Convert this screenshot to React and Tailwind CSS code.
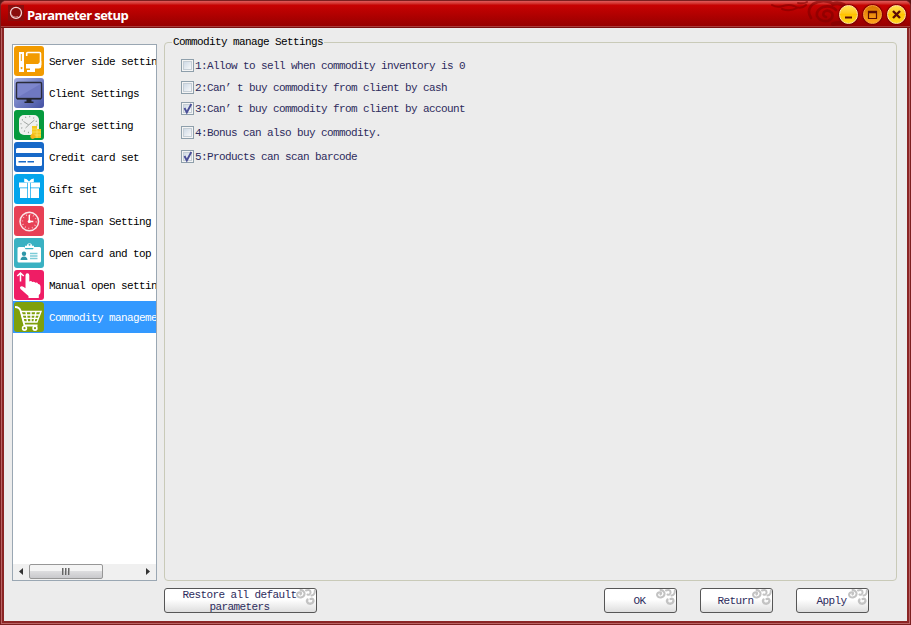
import React from "react";
import clsx from "clsx";

function ServerIcon() {
  return (
    <>
      <path fill="#fff" fillRule="evenodd" d="M5 6h5v20H5zM6.800 8v7h1V8zM7.500 21a1 1 0 1 0 .1 0z" />
      <path d="M12.700 10V7.500Q12.700 6.500 13.700 6.500H25.500Q26.500 6.500 26.500 7.500V19" fill="none" stroke="#fff" strokeWidth="1.600" />
      <path fill="#fff" d="M12 18h12l3.300-3v5q0 2.500-2.500 2.500H12zM16 22h5v2.200h-5zM13 24h8v2h-8z" />
    </>
  );
}

function MonitorIcon() {
  return (
    <>
      <rect x="2.500" y="4.500" width="25" height="16" rx="1" fill="#7d86cc" stroke="#2a2c3a" strokeWidth="1.400" />
      <path d="M3.500 19.500 26.500 6v13.500z" fill="#5963b2" opacity=".4" />
      <path fill="#23242e" d="M3 20h24v1.500H3zM12.500 21.500h5V24h-5zM10.500 23.500h9V25h-9z" />
    </>
  );
}

function ClockCoinsIcon() {
  return (
    <>
      <rect x="5" y="5" width="20" height="20" rx="5" fill="#eef0ef" />
      <circle cx="15" cy="14.500" r="8" fill="none" stroke="#939b96" strokeWidth="1.300" strokeDasharray="1 3.190" />
      <path d="m9.500 11.500 5.200 3.400L20.500 10M14.700 15 11.500 18" fill="none" stroke="#8c928e" strokeWidth=".8" />
      <path fill="#f2c71d" d="M18 16h5v3h4v9H17v-2h1z" />
      <path d="M18 19h5M18 22h9M17 25h10M23 19v9" stroke="#fae274" strokeWidth=".7" />
      <circle cx="18.700" cy="26.500" r="2.400" fill="#f5b418" />
    </>
  );
}

function CreditCardIcon() {
  return (
    <>
      <rect x="2" y="6" width="26" height="18" rx="1.500" fill="#fff" />
      <path fill="#1769c8" d="M2 11h26v4H2z" />
      <path d="M4.500 19.700h7.500M13.500 19.700h6.500" stroke="#1769c8" strokeWidth="1.500" />
    </>
  );
}

function GiftIcon() {
  return (
    <>
      <path fill="#fff" d="M5 8.500h8.300v5H5zM16.700 8.500H26v5h-9.300zM6 14.300h7.300V24H6zM16.700 14.300H25V24h-8.300z" />
      <path fill="#fff" d="M14 8.500h2v15.500h-2z" />
      <path fill="#fff" d="M15 8.800 10.200 8V4.500q2.800.2 4.800 3.100 2-2.900 4.800-3.100V8z" />
    </>
  );
}

function ClockIcon() {
  return (
    <>
      <circle cx="15.300" cy="15.500" r="9.300" fill="none" stroke="#fbe6e8" strokeWidth="1.500" />
      <circle cx="15.300" cy="15.500" r="6.900" fill="none" stroke="#f6bcc2" strokeWidth="1.500" strokeDasharray=".9 2.710" />
      <path d="M15.300 9v6.500h4" fill="none" stroke="#fff" strokeWidth="1.400" />
      <circle cx="15.300" cy="15.500" r="1.600" fill="#fff" />
    </>
  );
}

function BadgeIcon() {
  return (
    <>
      <path fill="#fff" fillRule="evenodd" d="M5 9h5.500l1 2.200h7.500l1-2.200h5.500q1.500 0 1.500 1.500v12.500q0 1.500-1.500 1.500H5q-1.500 0-1.500-1.500V10.500Q3.500 9 5 9z" />
      <path fill="#fff" d="M11 10V7.800h2a2.500 2.500 0 1 1 5 0h2V10z" />
      <circle cx="15.500" cy="6.800" r="1" fill="#3ab1c2" />
      <circle cx="10" cy="15.800" r="2.200" fill="#3097a8" />
      <path fill="#3097a8" d="M6.500 22q.3-3.500 3.500-3.500t3.500 3.500z" />
      <path d="M16 15.500h7.500M16 18h7.500M16 20.500h7.500" stroke="#7dccd7" strokeWidth="1.500" />
    </>
  );
}

function HandIcon() {
  return (
    <>
      <path d="M6.500 11.500V3.200M3.300 6l3.200-3 3.200 3" fill="none" stroke="#fff" strokeWidth="1.500" />
      <path
        fill="#fff"
        d="M11.500 5.200q0-2 1.900-2t1.900 2V11.500q1.800-1 3 .4 1.900-.8 3 .8 2-.6 2.900 1.200 2.300-.2 2.300 2.500V22q0 2-1.700 3v3H14.500v-2L6.500 19q-1.300-1.700.2-2.500 1.300-.7 3 .5l1.800 1.200z"
      />
    </>
  );
}

function CartIcon() {
  return (
    <>
      <path d="M1 5Q5.500 5.200 6.500 8.500L10.500 23.500H23.500" fill="none" stroke="#fff" strokeWidth="1.800" />
      <path d="M7 9.500H27L23 20H9.800zM8.200 13H25.500M9.200 16.400H24.300M12 9.500 13.500 20M17 9.500V20M22 9.500 20 20" fill="none" stroke="#fff" strokeWidth="1.400" />
      <circle cx="10.500" cy="26.200" r="1.900" fill="none" stroke="#fff" strokeWidth="1.600" />
      <circle cx="21" cy="26.200" r="1.900" fill="none" stroke="#fff" strokeWidth="1.600" />
    </>
  );
}

const SECTIONS = [
  { label: "Server side settings", color: "bg-[#f29b00]", Icon: ServerIcon },
  { label: "Client Settings", color: "bg-linear-to-br from-[#a5ade0] to-[#4450a3]", Icon: MonitorIcon },
  { label: "Charge setting", color: "bg-[#069a3e]", Icon: ClockCoinsIcon },
  { label: "Credit card set", color: "bg-[#1769c8]", Icon: CreditCardIcon },
  { label: "Gift set", color: "bg-[#03a5ec]", Icon: GiftIcon },
  { label: "Time-span Setting", color: "bg-[#e74055]", Icon: ClockIcon },
  { label: "Open card and top", color: "bg-[#3ab1c2]", Icon: BadgeIcon },
  { label: "Manual open setting", color: "bg-[#ef1d65]", Icon: HandIcon },
  { label: "Commodity management", color: "bg-[#7fa00c]", Icon: CartIcon },
];

const OPTIONS = [
  { label: "1:Allow to sell when commodity inventory is 0", checked: false, space: "mt-[11px]" },
  { label: "2:Can’ t buy commodity from client by cash", checked: false, space: "mt-[9px]" },
  { label: "3:Can’ t buy commodity from client by account", checked: true, space: "mt-[8px]" },
  { label: "4:Bonus can also buy commodity.", checked: false, space: "mt-[11px]" },
  { label: "5:Products can scan barcode", checked: true, space: "mt-[11px]" },
];

function WindowButton({ children, active, label }) {
  return (
    <button
      aria-label={label}
      className={clsx(
        "size-[19px] rounded-full border shadow-[0_0_1px_1px_#7b0000]",
        active
          ? "border-[#f6a83c] bg-linear-to-b from-[#d97800] to-[#ffa21a]"
          : "border-[#ffe9a0] bg-linear-to-b from-[#ffe14a] via-[#ffc400] to-[#ffd51c]"
      )}
    >
      <svg viewBox="0 0 17 17" className="size-[17px]" fill="none" stroke="#5c0c05">
        {children}
      </svg>
    </button>
  );
}

function TitleBar() {
  return (
    <header className="relative flex h-[27px] shrink-0 items-center rounded-t-[5px] border-b border-[#7b1010] bg-linear-to-b from-[#e25a5a] via-[#c80202] via-15% to-[#950000] pr-[4px] pl-[7px] shadow-[inset_0_-1px_0_#a83c3c]">
      <svg viewBox="0 0 16 16" className="mb-[2px] size-4" fill="none">
        <path fill="#8a0d0d" d="M0 0h16v16H0z" />
        <circle cx="8" cy="7.800" r="5.500" stroke="#f3d3d3" strokeWidth="1.300" />
        <path d="M3.500 9.500Q5 13 10 11.500" stroke="#c98080" />
      </svg>
      <h1 className="ml-[3px] flex-1 pt-[2px] font-['Open_Sans',sans-serif] text-[13px] leading-[18px] font-bold tracking-[-0.55px] text-white">
        Parameter setup
      </h1>
      <svg viewBox="0 0 78 26" className="absolute top-0 left-[769px] h-[26px] w-[78px]" fill="none" stroke="#800000" strokeLinecap="round" opacity=".6">
        <path d="M2 4Q7 7 13 5T24 5Q31 9 36 4M12 8Q20 11 27 7M28 2Q34 3 37 1" strokeWidth="2" />
        <path d="M41 17Q36 9 43 3 52 -2 62 2M66 9Q61 4 53 6 46 9 47 15 50 21 58 20 64 17 62 12 58 8 54 11 52 15 56 16" strokeWidth="2.600" />
        <path d="M63 23Q69 21 78 23M63 3Q68 1 74 4" strokeWidth="4" />
      </svg>
      <div className="relative flex gap-[5px]">
        <WindowButton label="Minimize">
          <path d="M5 11.500h7" strokeWidth="2" />
        </WindowButton>
        <WindowButton label="Maximize" active>
          <path d="M4.500 5v7.500h8V5M4 6h9" strokeWidth="1.200" />
          <path d="M4 6h9" strokeWidth="2.500" />
        </WindowButton>
        <WindowButton label="Close">
          <path d="m5 5 7 7m0-7-7 7" strokeWidth="2.400" />
        </WindowButton>
      </div>
    </header>
  );
}

function SectionList() {
  return (
    <nav className="mt-[8px] flex h-[537px] w-[145px] shrink-0 flex-col border border-[#9aa7b3] bg-white">
      <ul className="flex-1 overflow-hidden">
        {SECTIONS.map(({ label, color, Icon }, i) => (
          <li
            key={label}
            className={clsx("flex h-[32px] items-center pl-px", i === 8 && "bg-[#3399ff] text-white")}
          >
            <span className={clsx("size-[30px] shrink-0 overflow-hidden rounded-[3px]", color)}>
              <svg viewBox="0 0 30 30" className="size-[30px]">
                <Icon />
              </svg>
            </span>
            <span className="ml-[5px] pt-px whitespace-nowrap">{label}</span>
          </li>
        ))}
      </ul>
      <div className="flex h-[16px] items-start bg-[#f0f0f0] text-[#333]">
        <svg viewBox="0 0 16 16" className="size-4" fill="currentColor">
          <path d="m10 4-4 3.500 4 3.500z" />
        </svg>
        <div className="flex h-[15px] w-[74px] items-center justify-center gap-px rounded-[2px] border border-[#979797] bg-linear-to-b from-[#f4f4f4] from-50% via-[#dcdcde] via-50% to-[#c9c9cc]">
          <i className="h-[7px] w-[2px] border-l border-[#666] bg-[#aaa]" />
          <i className="h-[7px] w-[2px] border-l border-[#666] bg-[#aaa]" />
          <i className="h-[7px] w-[2px] border-l border-[#666] bg-[#aaa]" />
        </div>
        <svg viewBox="0 0 16 16" className="ml-auto size-4" fill="currentColor">
          <path d="m6 4 4 3.500-4 3.500z" />
        </svg>
      </div>
    </nav>
  );
}

function Option({ label, checked, space }) {
  return (
    <label className={clsx("flex h-[13px] items-center text-[#2d2b5c]", space)}>
      <span className="flex size-[13px] shrink-0 border border-[#8e9fab] bg-[#f4f4f4] p-px">
        <span className="size-[9px] border border-[#c5ced6] bg-linear-to-br from-[#cfdae6] to-[#f7f8f9]">
          {checked && (
            <svg viewBox="0 0 9 9" className="relative -top-px -left-px size-[9px] overflow-visible" fill="none">
              <path d="M1.500 4 3.800 8.500 8.300 0" stroke="#4b4f97" strokeWidth="1.900" />
            </svg>
          )}
        </span>
      </span>
      <span className="ml-px whitespace-pre">{label}</span>
    </label>
  );
}

function SkinButton({ children, className }) {
  return (
    <button
      className={clsx(
        "relative flex h-[25px] items-center justify-center rounded-[3px] border border-[#565656] bg-linear-to-b from-white from-45% to-[#dedede] pr-[2px] leading-[12px] text-[#2d2b5c]",
        className
      )}
    >
      <svg viewBox="0 0 21 17" className="absolute top-0 right-0 h-[17px] w-[21px]" fill="none" stroke="#c3c3c3" strokeWidth="2" strokeLinecap="round">
        <path d="M5.500 5.500Q7 4 5.200 3.300 2 3.500 2 6 3 8.800 6 8.500 10 7.500 9.500 4 8.500 1.200 5.500 1" />
        <path d="M11 1.500Q16 0 15.500 4 14.500 6.500 12.500 5.500M19.800 1.500Q20 6 16.500 6.500" />
        <path d="M12.500 10.500Q11 12.500 13.500 14.500 17.500 15.500 18.500 12 18.500 9 15.500 10" strokeWidth="2.300" />
      </svg>
      <span className="relative">{children}</span>
    </button>
  );
}

export default function App() {
  return (
    <div className="h-[625px] w-[911px] bg-[#5a1414] font-['Liberation_Mono',monospace] text-[11px] leading-[12px] tracking-[-0.6px] text-black">
      <div className="flex h-full flex-col rounded-t-[6px] border border-[#7c1f1f] bg-[#b96464]">
        <TitleBar />
        <main className="mx-px mb-px flex flex-1 flex-col border-2 border-t-0 border-[#8b2525] bg-[#ececec] pt-[8px] pl-[8px]">
          <div className="flex">
            <SectionList />
            <fieldset className="ml-[7px] h-[545px] w-[733px] rounded-[4px] border border-[#c9cab8] pl-[16px]">
              <legend className="-ml-[9px] px-px">Commodity manage Settings</legend>
              {OPTIONS.map((option) => (
                <Option key={option.label} {...option} />
              ))}
            </fieldset>
          </div>
          <footer className="mt-[7px] ml-[152px] flex">
            <SkinButton className="w-[153px]">
              Restore all default
              <br />
              parameters
            </SkinButton>
            <SkinButton className="ml-[287px] w-[73px]">OK</SkinButton>
            <SkinButton className="ml-[23px] w-[73px]">Return</SkinButton>
            <SkinButton className="ml-[23px] w-[73px]">Apply</SkinButton>
          </footer>
        </main>
      </div>
    </div>
  );
}
